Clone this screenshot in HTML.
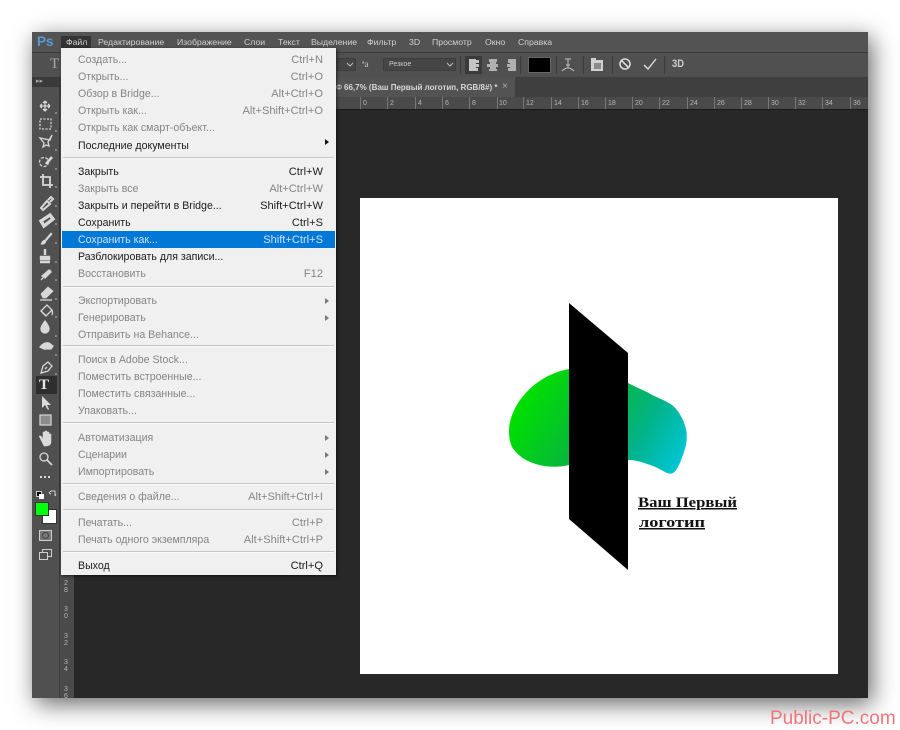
<!DOCTYPE html>
<html><head><meta charset="utf-8"><style>
html,body{margin:0;padding:0;background:#fff;width:900px;height:730px;overflow:hidden}
body{position:relative;font-family:"Liberation Sans",sans-serif}
#all{left:0;top:0;width:900px;height:730px;filter:blur(.35px)}
div,span{position:absolute}
#win{left:32px;top:32px;width:836px;height:666px;background:#282828;box-shadow:4px 6px 22px rgba(0,0,0,.6)}
.m{top:37px;font-size:8.7px;line-height:11px;color:#d2d2d2;white-space:nowrap}
#menu{left:61px;top:48px;width:275px;height:527px;background:#f0f0f0;box-shadow:1px 1px 3px rgba(0,0,0,.6)}
.i{left:17px;font-size:10.6px;line-height:14px;white-space:nowrap;color:#858585;margin-top:1px}
.s{right:13px;font-size:11.1px;line-height:14px;white-space:nowrap;color:#858585;margin-top:1px}
.k{color:#1c1c1c}
.h{left:2px;width:271px;background:#c6c6c6;border-bottom:1px solid #fafafa;height:1px}
.a{left:264px;width:0;height:0;border-left:4px solid #777;border-top:3px solid transparent;border-bottom:3px solid transparent}
.r{top:99px;font-size:7px;line-height:9px;color:#b5b5b5}
.t{top:97px;width:1px;height:12px;background:#777}
.v{left:63px;font-size:7px;line-height:7px;color:#b5b5b5;width:6px;text-align:center}
.sp{top:56px;width:1px;height:18px;background:#3c3c3c}
</style></head><body>
<div id="all">
<div id="win"></div>
<!-- menu bar -->
<div style="left:32px;top:32px;width:836px;height:20px;background:#535353"></div>
<div style="left:32px;top:52px;width:836px;height:1px;background:#3a3a3a"></div>
<div style="left:37px;top:33px;font-size:13.5px;line-height:17px;font-weight:bold;color:#5b9bd2">Ps</div>
<div style="left:61px;top:36px;width:30px;height:13px;background:#333"></div>
<span class="m" style="left:66px">Файл</span>
<span class="m" style="left:98px">Редактирование</span>
<span class="m" style="left:177px">Изображение</span>
<span class="m" style="left:244px">Слои</span>
<span class="m" style="left:278px">Текст</span>
<span class="m" style="left:311px">Выделение</span>
<span class="m" style="left:367px">Фильтр</span>
<span class="m" style="left:409px">3D</span>
<span class="m" style="left:432px">Просмотр</span>
<span class="m" style="left:485px">Окно</span>
<span class="m" style="left:518px">Справка</span>
<!-- options bar -->
<div style="left:32px;top:53px;width:836px;height:24px;background:#505050"></div>
<div style="left:50px;top:56px;font-family:'Liberation Serif',serif;font-size:15px;line-height:17px;color:#aaa">T</div>
<div style="left:337px;top:58px;width:19px;height:13px;background:#454545;border:1px solid #3d3d3d;box-sizing:border-box"></div>
<svg style="position:absolute;left:346px;top:62px" width="8" height="5"><path d="M1 1l3 3 3-3" fill="none" stroke="#bbb"/></svg>
<div style="left:362px;top:58px;font-size:9px;line-height:12px;color:#c8c8c8;font-family:'Liberation Serif',serif">ªa</div>
<div style="left:383px;top:58px;width:73px;height:13px;background:#454545;border:1px solid #3d3d3d;box-sizing:border-box"></div>
<div style="left:389px;top:59px;font-size:7px;line-height:11px;color:#ccc">Резкое</div>
<svg style="position:absolute;left:446px;top:62px" width="8" height="5"><path d="M1 1l3 3 3-3" fill="none" stroke="#bbb"/></svg>
<div class="sp" style="left:460px"></div>
<div style="left:465px;top:56px;width:17px;height:18px;background:#3a3a3a"></div>
<svg style="position:absolute;left:468px;top:58px" width="50" height="14" fill="#c4c4c4"><path d="M1 1h7v1h3v3h-3v1h3v3h-3v1h2v3H1z"/><path d="M21 1h8v3h-1v2h2v3h-2v2h1v2h-8v-2h1V9h-3V6h3V4h-1z" fill="#b0b0b0"/><path d="M40 1h8v12h-8v-3h2V9h-3V6h3V5h-2z" fill="#b0b0b0"/></svg>
<div class="sp" style="left:520px"></div>
<div style="left:529px;top:58px;width:21px;height:14px;background:#000;box-shadow:0 0 0 1px #666"></div>
<div class="sp" style="left:556px"></div>
<svg style="position:absolute;left:560px;top:57px" width="16" height="16" fill="none" stroke="#c4c4c4"><path d="M5 2h6M8 2v9M6 8h4M2 14q6-6 12 0"/></svg>
<div class="sp" style="left:583px"></div>
<svg style="position:absolute;left:590px;top:57px" width="14" height="15"><path d="M1 1h5v2h7v11H1z" fill="#d0d0d0"/><path d="M4 6h7v6H4z" fill="#8a8a8a"/></svg>
<div class="sp" style="left:612px"></div>
<svg style="position:absolute;left:618px;top:57px" width="14" height="14" fill="none" stroke="#d8d8d8" stroke-width="1.6"><circle cx="7" cy="7" r="5"/><path d="M3.5 3.5l7 7"/></svg>
<svg style="position:absolute;left:643px;top:58px" width="14" height="13" fill="none" stroke="#e0e0e0" stroke-width="1.4"><path d="M1 7l4 4 8-10"/></svg>
<div class="sp" style="left:664px"></div>
<div style="left:672px;top:58px;font-size:11px;line-height:13px;color:#cfcfcf;font-weight:bold;transform:scaleX(.85);transform-origin:left">3D</div>
<!-- tab row -->
<div style="left:32px;top:77px;width:836px;height:20px;background:#3f3f3f"></div>
<div style="left:336px;top:77px;width:179px;height:20px;background:#535353"></div>
<div style="left:344px;top:82px;font-size:8px;line-height:11px;font-weight:bold;color:#d8d8d8;white-space:nowrap">66,7% (Ваш Первый логотип, RGB/8#) *</div>
<div style="left:336px;top:83px;font-size:8px;line-height:10px;color:#ccc">Ф</div>
<div style="left:502px;top:81px;font-size:10px;line-height:11px;color:#aaa">×</div>
<!-- ruler -->
<div style="left:60px;top:97px;width:808px;height:12px;background:#4a4a4a"></div>
<div style="left:60px;top:109px;width:808px;height:1px;background:#1a1a1a"></div>
<div class="t" style="left:333px"></div><div class="t" style="left:360px"></div><div class="t" style="left:387px"></div><div class="t" style="left:415px"></div><div class="t" style="left:442px"></div><div class="t" style="left:469px"></div><div class="t" style="left:497px"></div><div class="t" style="left:523px"></div><div class="t" style="left:551px"></div><div class="t" style="left:578px"></div><div class="t" style="left:605px"></div><div class="t" style="left:632px"></div><div class="t" style="left:659px"></div><div class="t" style="left:687px"></div><div class="t" style="left:714px"></div><div class="t" style="left:741px"></div><div class="t" style="left:768px"></div><div class="t" style="left:795px"></div><div class="t" style="left:822px"></div><div class="t" style="left:850px"></div>
<span class="r" style="left:363px">0</span><span class="r" style="left:390px">2</span><span class="r" style="left:418px">4</span><span class="r" style="left:445px">6</span><span class="r" style="left:472px">8</span><span class="r" style="left:499px">10</span><span class="r" style="left:526px">12</span><span class="r" style="left:554px">14</span><span class="r" style="left:581px">16</span><span class="r" style="left:608px">18</span><span class="r" style="left:635px">20</span><span class="r" style="left:662px">22</span><span class="r" style="left:690px">24</span><span class="r" style="left:717px">26</span><span class="r" style="left:744px">28</span><span class="r" style="left:771px">30</span><span class="r" style="left:798px">32</span><span class="r" style="left:825px">34</span><span class="r" style="left:853px">36</span>
<!-- left ruler -->
<div style="left:60px;top:109px;width:14px;height:589px;background:#4a4a4a"></div>
<span class="v" style="top:580px">2<br>8</span><span class="v" style="top:606px">3<br>0</span><span class="v" style="top:633px">3<br>2</span><span class="v" style="top:659px">3<br>4</span><span class="v" style="top:686px">3<br>6</span>
<!-- toolbar -->
<div style="left:32px;top:77px;width:28px;height:621px;background:#505050;border-right:1px solid #3a3a3a;box-sizing:border-box"></div>
<div style="left:32px;top:77px;width:28px;height:10px;background:#3a3a3a"></div>
<div style="left:36px;top:77px;font-size:7px;line-height:9px;color:#aaa">▸▸</div>
<div style="left:36px;top:376px;width:21px;height:18px;background:#2e2e2e"></div>
<svg style="position:absolute;left:32px;top:95px" width="28" height="480" fill="none" stroke="#d8d8d8" stroke-width="1.3">
<path d="M13 6v10M8 11h10M13 6l-2 2M13 6l2 2M13 16l-2-2M13 16l2-2M8 11l2-2M8 11l2 2M18 11l-2-2M18 11l-2 2"/>
<rect x="8" y="24" width="11" height="10" stroke-dasharray="2 1.5"/>
<path d="M8 43l10 2 2-5-4 7 1 4-3-1-3 2 1-4z"/>
<circle cx="12" cy="67" r="4.5" stroke-dasharray="3 1.5"/><path d="M14 69l6-7" stroke-width="2.6"/>
<path d="M11 79v11h10M8 82h10v11" stroke-width="1.8"/>
<path d="M9 113l6-7 3 3-7 6zM16 105l3-3 2 2-3 3" stroke-width="2"/>
<path d="M9 126l9-6 3 4-9 7z" stroke-width="3.4"/>
<path d="M9 149q2-4 4-4l6-7 1 1-6 7q-1 4-5 3z" fill="#d8d8d8" stroke-width=".8"/>
<path d="M13 154v6M9 164v-2h8v2zM8 167h10" stroke-width="2.4"/>
<path d="M9 185l10-10" stroke-dasharray="3 1.5"/><path d="M10 181l7-6 2 2-6 6z" fill="#d8d8d8"/>
<path d="M9 199l7-7 5 4-7 7h-3z" fill="#d8d8d8" stroke-width=".8"/><path d="M8 205h12"/>
<path d="M9 216l6-6 5 5-6 6zM20 215q1 3 0 5" /><path d="M9 216l5 5" />
<path d="M13 226q4 5 4 8a4 4 0 0 1-8 0q0-3 4-8z" fill="#d8d8d8"/>
<path d="M8 252q4-5 9-4l4 3-2 3h-7z" fill="#d8d8d8"/>
<path d="M9 278l2-7 5-4 4 4-4 5zM13 274l2-2"/>
<path d="M24 19v-2M24 37v-2M24 56v-2M24 75v-2M24 93v-2M24 112v-2M24 130v-2M24 149v-2M24 168v-2M24 186v-2M24 205v-2M24 223v-2M24 242v-2M24 261v-2M24 280v-2" stroke="#bbb" stroke-width="1"/>
</svg>
<div style="left:39px;top:376px;font-family:'Liberation Serif',serif;font-size:15px;font-weight:bold;line-height:18px;color:#e8e8e8">T</div>
<svg style="position:absolute;left:32px;top:394px" width="28" height="175" fill="none" stroke="#d8d8d8" stroke-width="1.3">
<path d="M10 2l0 12 3-3 3 5 1-1-2-4h4z" fill="#dcdcdc" stroke="none"/>
<rect x="8" y="21" width="11" height="10" fill="#8c8c8c" stroke="#d0d0d0"/>
<path d="M9 46l-2-4 2 0 2 3v-7h2v5-6h2v6-5h2v6-4h2v8q0 4-5 4h-2z" fill="#dcdcdc" stroke-width=".5"/>
<circle cx="12" cy="63" r="4"/><path d="M15 66l5 5" stroke-width="1.8"/>
<path d="M8 83h2M12 83h2M16 83h2" stroke-width="2"/>
</svg>
<div style="left:36px;top:491px;width:6px;height:6px;background:#000;border:1px solid #ccc;box-sizing:border-box"></div>
<div style="left:39px;top:494px;width:5px;height:5px;background:#fff"></div>
<svg style="position:absolute;left:48px;top:490px" width="9" height="8" fill="none" stroke="#ccc"><path d="M1 3l2-2h4v5M1 3l2 1M7 6l1-2"/></svg>
<div style="left:43px;top:510px;width:13px;height:13px;background:#fff;box-shadow:0 0 0 1px #333"></div>
<div style="left:36px;top:503px;width:12px;height:12px;background:#00ff0a;box-shadow:0 0 0 1px #333"></div>
<svg style="position:absolute;left:38px;top:529px" width="16" height="34" fill="none" stroke="#cfcfcf"><rect x="1.5" y="1.5" width="12" height="10" fill="#777"/><circle cx="7.5" cy="6.5" r="3" stroke="#444"/><rect x="4.5" y="20.5" width="9" height="7"/><rect x="1.5" y="23.5" width="8" height="7" fill="#505050"/></svg>
<!-- menu -->
<div id="menu">
<span class="i" style="top:4px">Создать...</span><span class="s" style="top:4px">Ctrl+N</span>
<span class="i" style="top:21px">Открыть...</span><span class="s" style="top:21px">Ctrl+O</span>
<span class="i" style="top:38px">Обзор в Bridge...</span><span class="s" style="top:38px">Alt+Ctrl+O</span>
<span class="i" style="top:55px">Открыть как...</span><span class="s" style="top:55px">Alt+Shift+Ctrl+O</span>
<span class="i" style="top:72px">Открыть как смарт-объект...</span>
<span class="i k" style="top:90px">Последние документы</span>
<div class="a" style="top:91px;border-left-color:#111"></div>
<div class="h" style="top:109px"></div>
<span class="i k" style="top:116px">Закрыть</span><span class="s k" style="top:116px">Ctrl+W</span>
<span class="i" style="top:133px">Закрыть все</span><span class="s" style="top:133px">Alt+Ctrl+W</span>
<span class="i k" style="top:150px">Закрыть и перейти в Bridge...</span><span class="s k" style="top:150px">Shift+Ctrl+W</span>
<span class="i k" style="top:167px">Сохранить</span><span class="s k" style="top:167px">Ctrl+S</span>
<div style="left:1px;top:183px;width:273px;height:17px;background:#0078d7"></div>
<span class="i" style="top:184px;color:#cfe2f5">Сохранить как...</span><span class="s" style="top:184px;color:#cfe2f5">Shift+Ctrl+S</span>
<span class="i k" style="top:201px">Разблокировать для записи...</span>
<span class="i" style="top:218px">Восстановить</span><span class="s" style="top:218px">F12</span>
<div class="h" style="top:238px"></div>
<span class="i" style="top:245px">Экспортировать</span><div class="a" style="top:250px"></div>
<span class="i" style="top:262px">Генерировать</span><div class="a" style="top:267px"></div>
<span class="i" style="top:279px">Отправить на Behance...</span>
<div class="h" style="top:297px"></div>
<span class="i" style="top:304px">Поиск в Adobe Stock...</span>
<span class="i" style="top:321px">Поместить встроенные...</span>
<span class="i" style="top:338px">Поместить связанные...</span>
<span class="i" style="top:355px">Упаковать...</span>
<div class="h" style="top:374px"></div>
<span class="i" style="top:382px">Автоматизация</span><div class="a" style="top:387px"></div>
<span class="i" style="top:399px">Сценарии</span><div class="a" style="top:404px"></div>
<span class="i" style="top:416px">Импортировать</span><div class="a" style="top:421px"></div>
<div class="h" style="top:435px"></div>
<span class="i" style="top:441px">Сведения о файле...</span><span class="s" style="top:441px">Alt+Shift+Ctrl+I</span>
<div class="h" style="top:461px"></div>
<span class="i" style="top:467px">Печатать...</span><span class="s" style="top:467px">Ctrl+P</span>
<span class="i" style="top:484px">Печать одного экземпляра</span><span class="s" style="top:484px">Alt+Shift+Ctrl+P</span>
<div class="h" style="top:503px"></div>
<span class="i k" style="top:510px">Выход</span><span class="s k" style="top:510px">Ctrl+Q</span>
</div>
<!-- document -->
<div style="left:360px;top:198px;width:478px;height:476px;background:#fff"></div>
<svg style="position:absolute;left:0;top:0" width="900" height="730">
<defs><linearGradient id="g" gradientUnits="userSpaceOnUse" x1="530" y1="385" x2="680" y2="475"><stop offset="0" stop-color="#00e000"/><stop offset=".4" stop-color="#06b83a"/><stop offset=".7" stop-color="#02b38a"/><stop offset="1" stop-color="#00c8e0"/></linearGradient></defs>
<path d="M569 369C548 373 532 384 520 400C513 410 509 421 509 431C509 441 511 447 515 451C521 458 527 461 533 463C543 467 557 468 569 465L628 460C636 460 642 462 647 464C655 466 661 470 665 472C669 474 671 474 673 473C679 470 684 452 686 445C688 433 686 428 683 420C680 414 677 409 672 405C665 400 655 397 647 392C640 389 634 386 628 383Z" fill="url(#g)"/>
<path d="M569 303L628 353V570L569 519Z" fill="#000"/>
<text x="638" y="507" font-family="Liberation Serif" font-weight="bold" font-size="15" textLength="99" lengthAdjust="spacingAndGlyphs" text-decoration="underline" fill="#111">Ваш Первый</text>
<text x="639" y="527" font-family="Liberation Serif" font-weight="bold" font-size="15" textLength="66" lengthAdjust="spacingAndGlyphs" text-decoration="underline" fill="#111">логотип</text>
</svg>
<div style="left:770px;top:707px;font-size:19px;line-height:24px;color:#f0757a;white-space:nowrap">Public-PC.com</div>
</div>
</body></html>
